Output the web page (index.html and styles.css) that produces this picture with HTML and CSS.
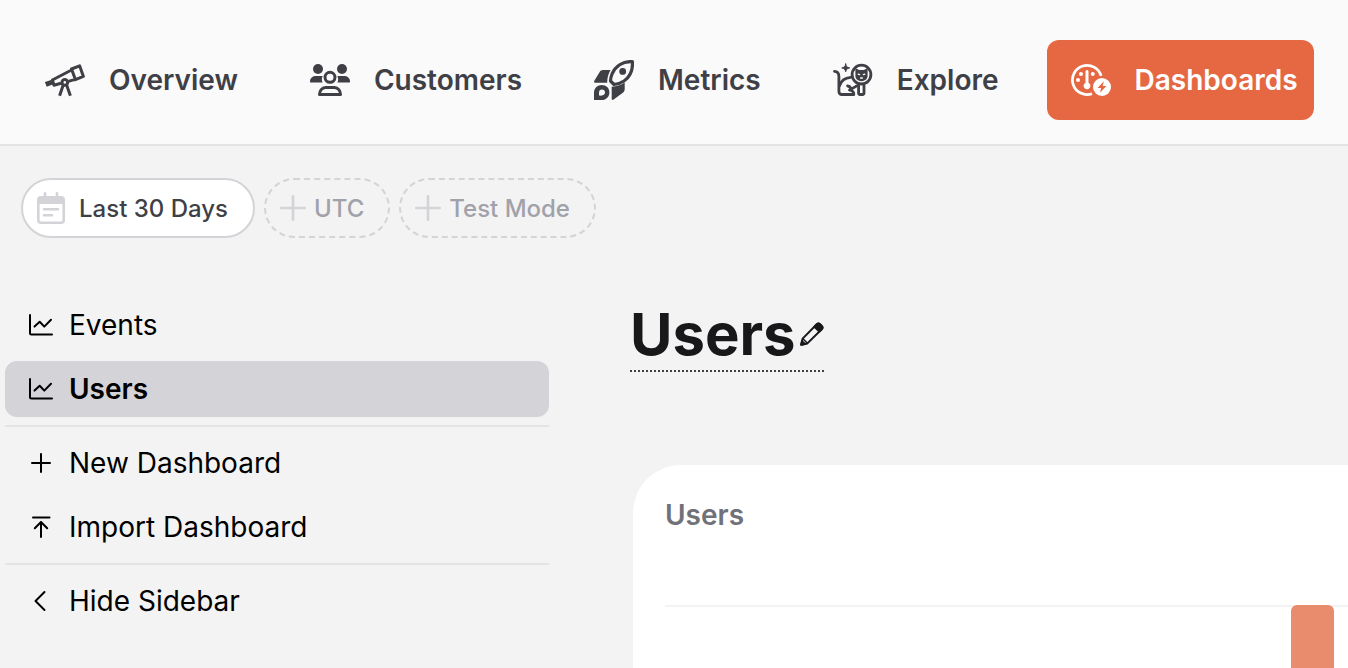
FILE: index.html
```html
<!DOCTYPE html>
<html lang="en">
<head>
    <meta charset="UTF-8">
    <meta name="viewport" content="width=device-width, initial-scale=1.0">
    <title>Users - Dashboards</title>
    <link rel="stylesheet" href="styles.css">
</head>
<body>
    <header class="header">
        <nav class="nav">
            <a href="#" class="nav-link">
                <svg class="nav-icon" viewBox="0 0 40 40" fill="none" stroke="currentColor" stroke-width="3" stroke-linejoin="round">
                    <path d="M26.5 9 34.6 5.8 38.4 16.4 30.4 19.6zM26.5 10 7.4 20 9 25.2 16 23.2M23.4 21.4 30 19.4"/>
                    <path d="M7.6 22 .8 24.4" stroke-width="5"/>
                    <circle cx="19.8" cy="22.4" r="2.8"/>
                    <path d="M18.2 25 14.6 35.8M21.6 25 25.4 35.8"/>
                </svg>
                Overview
            </a>
            <a href="#" class="nav-link">
                <svg class="nav-icon" viewBox="0 0 40 40" fill="currentColor">
                    <circle cx="8" cy="9" r="5"/>
                    <circle cx="32" cy="9" r="5"/>
                    <path d="M5 16h7.6a8 8 0 0 0 0 6.6H1.2C.4 22.6 0 22.2 0 21.4A5.3 5.3 0 0 1 5 16zM35 16h-7.6a8 8 0 0 1 0 6.6h11.4c.8 0 1.2-.4 1.2-1.2A5.3 5.3 0 0 0 35 16z"/>
                    <circle cx="20" cy="17.3" r="5" fill="none" stroke="currentColor" stroke-width="3"/>
                    <path d="M15.5 27.4h9c3.500 0 6 3.500 6 7.100h-21c0-3.600 2.500-7.100 6-7.100z" fill="none" stroke="currentColor" stroke-width="3" stroke-linejoin="round"/>
                </svg>
                Customers
            </a>
            <a href="#" class="nav-link">
                <svg class="nav-icon" viewBox="0 0 40 40" fill="currentColor">
                    <path d="M38.4 1.6C29 1 21.500 6 18 14c-1 2.500-1.500 5-1.500 7l3.500 3.500c3.500-.4 7-1.500 10-3.500 6.500-4.500 9-11 8.400-19.400z" fill="none" stroke="currentColor" stroke-width="3.2" stroke-linejoin="round"/>
                    <circle cx="28.7" cy="11.4" r="3.4"/>
                    <path d="M9 10h7.500c-2.200 4-3.300 8-3.300 12.700H1.500C.3 22.700-.2 22 .2 21L5.500 12.300C6.300 10.800 7.400 10 9 10z"/>
                    <path d="M17.700 26.700c5-.3 9.300-1.700 13-4.300V29c0 1.800-.7 3-2.200 4l-8.800 6.500c-1.200.8-2 .4-2-.9z"/>
                    <path d="M0 40v-7.500C0 28 3.500 25 7.800 25s7.600 3 7.600 7.200c0 4.600-3.200 7.800-7.700 7.800zM5 35.500c4 .6 6-.7 6-3.200 0-1.800-1.300-2.900-3-2.900s-3 1.200-3 3z" fill-rule="evenodd"/>
                </svg>
                Metrics
            </a>
            <a href="#" class="nav-link">
                <svg class="nav-icon" viewBox="0 0 40 40" fill="none" stroke="currentColor" stroke-width="2.8" stroke-linecap="round" stroke-linejoin="round">
                    <path d="M1.500 11.400c3.200.2 4.400 2 4.400 5v14.800c0 2.200 1 3.300 3.200 3.300h11.700c.3-2.700-1.500-4-4.300-4.300"/>
                    <path d="M17.500 17.400c-5.500.6-9.500 3.600-11 8.400M14.600 26c2 .2 3 1.300 3.200 3.400l6.400-3.800"/>
                    <path d="M25.600 25.500v7.600c0 .9.500 1.400 1.400 1.400h2.600c.9 0 1.400-.5 1.400-1.400v-8"/>
                    <circle cx="28.500" cy="14.600" r="9.400"/>
                    <path d="M22.400 8.300 26.300 10h4.400l3.900-1.700v7.700c0 3-2.900 5.200-6.100 5.200s-6.100-2.200-6.100-5.200z" fill="currentColor" stroke="none"/>
                    <path d="m25.200 14.200 1.400.5M31.800 14.200l-1.400.5M27.600 18h1.800" stroke="#fafafa" stroke-width="1.300"/>
                    <path d="M12.700 4c.6 2.700 1.200 3.300 3.900 3.900-2.700.6-3.300 1.200-3.900 3.900-.6-2.700-1.200-3.300-3.900-3.900 2.700-.6 3.300-1.200 3.900-3.900z" fill="currentColor" stroke-width="1"/>
                </svg>
                Explore
            </a>
            <a href="#" class="nav-link active">
                <svg class="nav-icon" viewBox="0 0 40 40" fill="currentColor">
                    <path d="M30.100 16A14.600 14.600 0 1 0 21 33.700" fill="none" stroke="currentColor" stroke-width="2.8"/>
                    <circle cx="10" cy="14" r="2"/>
                    <circle cx="21.800" cy="14" r="2"/>
                    <circle cx="7" cy="20" r="2"/>
                    <path d="M14.500 11.500a1.500 1.500 0 0 1 3 0v11.300a3.400 3.400 0 1 1-3 0z"/>
                    <circle cx="31" cy="27" r="11" class="badge-gap"/>
                    <circle cx="31" cy="27" r="9"/>
                    <path d="M32.800 21.300 26.600 27.900h3.500L29 32.700l6.400-6.600h-3.700z" class="badge-gap"/>
                </svg>
                Dashboards
            </a>
        </nav>
    </header>

    <div class="filters">
        <button type="button" class="filter filter-set">
            <svg class="calendar-icon" viewBox="0 0 28 32" fill="none" stroke="currentColor" stroke-linecap="round">
                <path d="M8 1.300V6M20 1.300V6M7 17.300h14M7 23.300h8" stroke-width="2.6"/>
                <rect x="1.300" y="5.300" width="25.400" height="25.400" rx="2.500" stroke-width="2.6"/>
                <path d="M1.300 12V7c0-1.200.8-2 2-2h21.400c1.200 0 2 .8 2 2v5z" fill="currentColor" stroke="none"/>
            </svg>
            Last 30 Days
        </button>
        <button type="button" class="filter">
            <svg class="add-icon" viewBox="0 0 26 26" fill="none" stroke="currentColor" stroke-width="2.6" stroke-linecap="round">
                <path d="M13 1.300v23.400M1.300 13h23.400"/>
            </svg>
            UTC
        </button>
        <button type="button" class="filter">
            <svg class="add-icon" viewBox="0 0 26 26" fill="none" stroke="currentColor" stroke-width="2.6" stroke-linecap="round">
                <path d="M13 1.300v23.400M1.300 13h23.400"/>
            </svg>
            Test Mode
        </button>
    </div>

    <div class="layout">
        <aside class="sidebar">
            <a href="#" class="side-item">
                <svg class="side-icon" viewBox="0 0 24 24">
                    <path d="M1 2v18c0 1 .5 1.500 1.500 1.500H23M5.500 13.600l5.200-4.900 4.600 4.900 6.700-6.900"/>
                </svg>
                Events
            </a>
            <a href="#" class="side-item active">
                <svg class="side-icon" viewBox="0 0 24 24">
                    <path d="M1 2v18c0 1 .5 1.500 1.500 1.500H23M5.500 13.600l5.200-4.900 4.600 4.900 6.700-6.900"/>
                </svg>
                Users
            </a>
            <hr class="divider">
            <button type="button" class="side-item">
                <svg class="side-icon" viewBox="0 0 24 24">
                    <path d="M12 3v18M3 12h18"/>
                </svg>
                New Dashboard
            </button>
            <button type="button" class="side-item">
                <svg class="side-icon" viewBox="0 0 24 24">
                    <path d="M4 2.500h16.500M12 22V7M5.800 13.300 12 7l6.200 6.300"/>
                </svg>
                Import Dashboard
            </button>
            <hr class="divider">
            <button type="button" class="side-item">
                <svg class="side-icon" viewBox="0 0 24 24">
                    <path d="M15.500 3 6.500 12l9 9"/>
                </svg>
                Hide Sidebar
            </button>
        </aside>

        <main class="content">
            <div class="title-bar">
                <h1>Users</h1>
                <button type="button" class="edit-btn" aria-label="Edit name">
                    <svg class="edit-icon" viewBox="0 0 24 24" fill="none" stroke="currentColor" stroke-width="2" stroke-linejoin="round">
                        <path d="M1.200 22.800l1.400-6.200L16.800 2.300c1-1 2.200-1 3.200 0l1.700 1.700c1 1 1 2.200 0 3.200L7.400 21.400z"/>
                        <path d="M14.400 4.700 16.800 2.300c1-1 2.200-1 3.200 0l1.700 1.700c1 1 1 2.200 0 3.200l-2.400 2.400zM1.200 22.800l.8-3.600 2.800 2.800z" fill="currentColor"/>
                        <path d="M3 16.800l4.200 4.200" stroke-width="1.500"/>
                    </svg>
                </button>
            </div>

            <section class="card">
                <h2>Users</h2>
                <div class="chart">
                    <div class="bar"></div>
                </div>
            </section>
        </main>
    </div>
</body>
</html>
```
FILE: styles.css
```css
* {
    box-sizing: border-box;
}
body {
    display: flex;
    flex-direction: column;
    min-height: 100vh;
    margin: 0;
    background: #f3f3f3;
    color: #3f3f46;
    font-family: Inter, "Liberation Sans", sans-serif;
    font-size: 28px;
}
a {
    color: inherit;
    text-decoration: none;
}
button {
    border: none;
    background: none;
    color: inherit;
    font: inherit;
    cursor: pointer;
}
svg {
    flex: none;
}

/* Header */
.header {
    padding: 40px 20px 24px 21px;
    background: #fafafa;
    border-bottom: 2px solid #e3e3e4;
}
.nav {
    display: flex;
    gap: 32px;
}
.nav-link {
    display: flex;
    align-items: center;
    gap: 24px;
    height: 80px;
    padding: 0 16px 0 24px;
    border-radius: 12px;
    font-weight: 600;
}
.nav-link.active {
    background: #e56843;
    color: #fff;
}
.nav-icon {
    width: 40px;
    height: 40px;
}
.badge-gap {
    fill: #e56843;
}

/* Filters */
.filters {
    display: flex;
    gap: 9px;
    padding: 32px 21px 0;
}
.filter {
    display: flex;
    align-items: center;
    gap: 8px;
    height: 60px;
    padding: 0 24px 0 14px;
    border: 2px dashed #d4d4d8;
    border-radius: 30px;
    color: #a1a1aa;
    font-size: 24px;
    font-weight: 500;
}
.filter svg {
    color: #d4d4d8;
}
.filter-set {
    gap: 14px;
    padding-right: 25px;
    border-style: solid;
    background: #fff;
    color: #3f3f46;
}
.calendar-icon {
    width: 28px;
    height: 32px;
}
.add-icon {
    width: 26px;
    height: 26px;
}

/* Sidebar */
.layout {
    display: flex;
    flex: 1;
    gap: 81px;
    padding: 59px 0 0 5px;
}
.sidebar {
    display: flex;
    flex: none;
    flex-direction: column;
    gap: 8px;
    width: 544px;
    color: #000;
}
.side-item {
    display: flex;
    align-items: center;
    gap: 16px;
    height: 56px;
    padding: 0 24px;
    border-radius: 12px;
    text-align: left;
}
.side-item.active {
    background: #d4d4d8;
    font-weight: 600;
}
.side-icon {
    width: 24px;
    height: 24px;
    fill: none;
    stroke: currentColor;
    stroke-width: 2;
    stroke-linecap: round;
    stroke-linejoin: round;
}
.divider {
    width: 100%;
    margin: 0;
    border: none;
    border-top: 2px solid #e4e4e5;
}

/* Dashboard */
.content {
    display: flex;
    flex: 1;
    flex-direction: column;
    align-items: flex-start;
}
.title-bar {
    display: flex;
    align-items: center;
    gap: 4px;
    border-bottom: 2px dotted #3f3f46;
    color: #18181b;
}
h1 {
    margin: 0;
    padding-top: 1px;
    font-size: 58px;
    font-weight: 700;
    line-height: 72px;
}
.edit-btn {
    display: flex;
    padding: 0;
}
.edit-icon {
    width: 24px;
    height: 24px;
}
.card {
    display: flex;
    flex: 1;
    flex-direction: column;
    align-self: stretch;
    margin: 93px 0 0 3px;
    padding: 32px 0 0 32px;
    border-top-left-radius: 48px;
    background: #fff;
}
h2 {
    margin: 0;
    color: #71717a;
    font-size: 28px;
    font-weight: 600;
    line-height: 36px;
}
.chart {
    display: flex;
    flex: 1;
    justify-content: flex-end;
    margin-top: 72px;
    padding-right: 14px;
    background: linear-gradient(#f3f3f3, #f3f3f3) top / 100% 2px no-repeat;
}
.bar {
    width: 43px;
    border-radius: 6px 6px 0 0;
    background: #e88c6d;
}
```
